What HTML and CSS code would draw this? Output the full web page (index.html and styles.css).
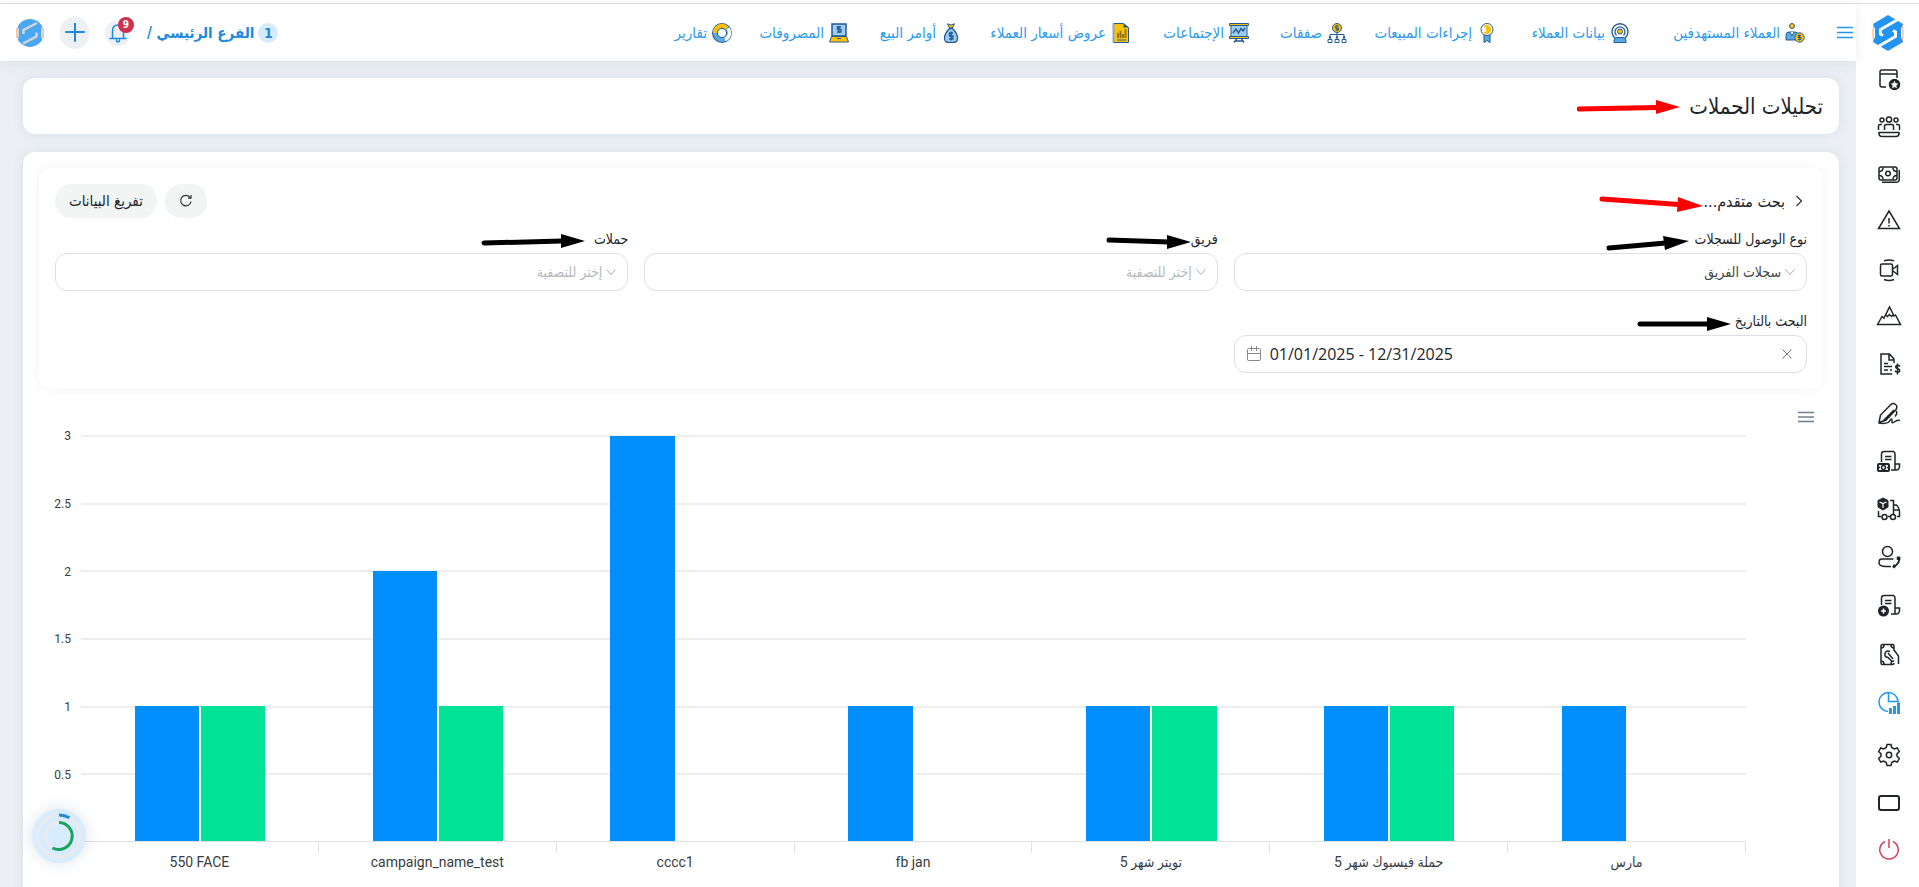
FILE: index.html
```
<!DOCTYPE html>
<html lang="ar" dir="rtl">
<head>
  <meta charset="UTF-8" />
  <meta name="viewport" content="width=device-width, initial-scale=1.0"/>
  <title>تحليلات الحملات</title>
  <link rel="stylesheet" href="styles.css">
</head>
<body>
  <div class="app">

    <!-- Sidebar -->
    <aside class="sidebar">
      <a class="logo" href="#" aria-label="الرئيسية">
        <svg width="32" height="36" viewBox="0 0 32 36">
          <path d="M2 10 Q0 18 2 27 M30 10 Q32 18 30 27" fill="none" stroke="#ffc48f" stroke-width="1.5"/>
          <path d="M16 0 31 9 29 14V22L31 27 16 36 1 27 3 22V14L1 9Z" fill="#2094f0"/>
          <path d="M25 5 8.500 14.500V19L11 20.500M7 31 23.500 21.500V17L21 15.500" fill="none" stroke="#fff" stroke-width="3"/>
        </svg>
      </a>
      <nav class="side-menu">
        <a href="#" aria-label="الحجوزات"><svg viewBox="0 0 24 24"><path d="M9 20H5q-2 0-2-2V5q0-2 2-2h13q2 0 2 2v6M3 7h17"/><circle class="solid" cx="17.500" cy="17.500" r="5"/><path fill="#fff" stroke="none" d="m17.500 13.800 1.200 2.500 2.600.3-1.900 1.900.5 2.700-2.400-1.300-2.400 1.300.5-2.700-1.900-1.900 2.600-.3z"/></svg></a>
        <a href="#" aria-label="الموظفون"><svg viewBox="0 0 24 24"><circle cx="12" cy="4.500" r="2.600"/><circle cx="5" cy="5" r="2"/><circle cx="19" cy="5" r="2"/><path d="M7.500 15v-4q0-1.500 1.500-1.500h6q1.500 0 1.500 1.500v4M1.500 15v-4q0-1.500 1.500-1.500h2M22.500 15v-4q0-1.500-1.500-1.500h-2M2 17.500h20v1q0 3-3 3H5q-3 0-3-3z"/></svg></a>
        <a href="#" aria-label="المالية"><svg viewBox="0 0 24 24"><rect x="2" y="4" width="18" height="13" rx="2"/><circle cx="11" cy="10.500" r="2.300"/><path d="M2 8.500q4 0 4-4M20 8.500q-4 0-4-4M2 12.500q4 0 4 4M20 12.500q-4 0-4 4M22.300 7v9q0 3.300-3.300 3.300H5"/></svg></a>
        <a href="#" aria-label="التنبيهات"><svg viewBox="0 0 24 24"><path d="M12 0 22.500 17.500H1.500zM12 7v5.500M12 14v1.500"/></svg></a>
        <a href="#" aria-label="الإجتماعات"><svg viewBox="0 0 24 24"><rect x="3.500" y="5" width="12" height="12" rx="1.500"/><path d="m16 10 4.500-3.500v9L16 12M7 1.800q5-1.800 10 0M7 20.500q5 1.800 10 0"/></svg></a>
        <a href="#" aria-label="الأهداف"><svg viewBox="0 0 24 24"><path d="M.5 17.500 5 9.500l2 1.500L12.500 0 17 9l1.500-1 5 9.500zM9 8l1.500 1.500 2-2 2 2L16 8"/></svg></a>
        <a href="#" aria-label="الفواتير"><svg viewBox="0 0 24 24"><path d="M17 8V4L12.500-1H4v20h11M12 -1v6h5M7 8.500h4M7 11.500h8M7 15h4M13 15h2M23 11.500q-1-1.500-2.500-1.300-2.500.5-1.500 2.500 2.500 1 3.500 2 .8 2-1.500 2.500-2 .2-3-1.500M20.500 8.500v11"/></svg></a>
        <a href="#" aria-label="العقود"><svg viewBox="0 0 24 24"><path d="M2 19.500 3.500 12 14 1.500q2-2 4.500 0t.5 5L9 17zM6 18 17 7M19 8q2 2-1 5.500M2 20q9 1.500 11-2.500 2-3 2 0-.5 4 3 1 3-2 5-1"/></svg></a>
        <a href="#" aria-label="كشوف الرواتب"><svg viewBox="0 0 24 24"><path d="M4.500 11V3q0-2.500 2.500-2.500h9.500q1.500.5 1.500 2.500V13h4.500v2q0 4-3.500 4H14M8 5.500h6.500M8 8.500h6.500M18 13v6"/><rect x="1" y="13" width="11" height="7" rx="1" stroke-width="2"/><circle cx="6.500" cy="16.500" r="2"/><path d="M1 16.500h2M10 16.500h2"/></svg></a>
        <a href="#" aria-label="التوصيل"><svg viewBox="0 0 24 24"><path class="solid" stroke-width="1" d="M6-1 11 1.500v6.500l-5 3-5-3V1.500z"/><path stroke="#fff" stroke-width="1.200" d="m2.500 3 3.500 1.500L9.500 3M6 4.500V9"/><path d="M1.500 12v5.500H4M13 1.500h3.500V15M11 17.500h2M16.500 6h3q3 3 3 7v4.500H20M17 11h5"/><circle cx="7.500" cy="18" r="2.500"/><circle cx="16" cy="18" r="2.500"/></svg></a>
        <a href="#" aria-label="خدمة العملاء"><svg viewBox="0 0 24 24"><circle cx="10.500" cy="4.500" r="5"/><path d="M14 19.500H9q-7 0-7-4t3.500-3.500h11"/><path d="M22.300 11q.7 5-5.500 9" stroke-width="2"/><path d="M21.500 9.500v3.500M16 18.500l2.500 1.500" stroke-width="3.500"/></svg></a>
        <a href="#" aria-label="إضافة مستند"><svg viewBox="0 0 24 24"><path d="M4.500 10V3q0-2.500 2.500-2.500h9.500q1.500.5 1.500 2.500V13h4.500v2q0 4-3.500 4H14M8 5.500h6.500M8 8.500h6.500M18 13v6"/><circle class="solid" cx="6.500" cy="16" r="4.800"/><path stroke="#fff" d="M6.500 13.500v5M4 16h5"/></svg></a>
        <a href="#" aria-label="السلف"><svg viewBox="0 0 24 24"><path d="M17 8V3q0-1.500-1.500-1.500h-10Q4 1.500 4 3v17q0 1.500 1.500 1.500h10Q17 21.500 17 20M4 5q3 0 3-3M17 5q-3 0-3-3M4 18q3 0 3 3M17 18q-3 0-3 3M13 8.500q-4-1.500-5 2t3 4l4 4M11 10l5 6M17 7l4.500 6v8"/></svg></a>
        <a class="active" href="#" aria-label="التحليلات"><svg viewBox="0 0 24 24"><path d="M11 20.500A9.500 9.500 0 1 1 21 10.500H11.500V1.500"/><path stroke-width="3" stroke-linecap="butt" d="M13.500 23v-6M17.500 23v-8M21.500 23V11.500"/></svg></a>
        <a href="#" aria-label="الإعدادات" class="gap-top"><svg viewBox="0 0 24 24"><path d="m10 1.500h4l.7 3 2.600 1.500 3-1 2 3.500-2.300 2.200v2.600l2.300 2.200-2 3.500-3-1-2.600 1.500-.7 3h-4l-.7-3L6.700 18l-3 1-2-3.500L4 13.300v-2.600L1.700 8.500l2-3.500 3 1 2.600-1.500z"/><circle cx="12" cy="12" r="2.700"/></svg></a>
        <a href="#" aria-label="الشاشة"><svg viewBox="0 0 24 24"><rect x="2" y="5" width="20" height="14" rx="2" stroke-width="2"/></svg></a>
        <a class="danger" href="#" aria-label="تسجيل الخروج"><svg viewBox="0 0 24 24"><path d="M8 2.500a9.200 9.200 0 1 0 8 0M12 0v9"/></svg></a>
      </nav>
    </aside>

    <!-- Header -->
    <header class="topbar">
      <button class="icon-btn burger" aria-label="القائمة"><svg width="16" height="14" viewBox="0 0 16 14"><path d="M0 1.500h16M0 6.500h16M0 11.500h16" stroke="#2196f3" stroke-width="1.300"/></svg></button>
      <nav class="top-menu">
        <a href="#"><svg viewBox="0 0 20 20"><circle cx="7" cy="3" r="2.500" fill="#ffc107" stroke="#245a94"/><path d="M1 17v-5q0-3 3-3h6q3 0 3 3v5z" fill="#59a9e2" stroke="#245a94"/><path d="m5 9 2 4 2-4" fill="#fff" stroke="#245a94"/><circle cx="14.500" cy="14.500" r="4.700" fill="#ffc107" stroke="#245a94"/><path d="M16 12.500h-3v2h3v2h-3M14.500 11.500v6" fill="none" stroke="#245a94"/></svg>العملاء المستهدفين</a>
        <a href="#"><svg viewBox="0 0 20 20"><path d="M5 15a8 8 0 1 1 10 0M6.500 12.500a5 5 0 1 1 7 0" fill="none" stroke="#245a94" stroke-width="1.300"/><circle cx="10" cy="8.500" r="2.500" fill="#ffc107" stroke="#245a94"/><path d="M4 19.500v-2q0-3 3-3h6q3 0 3 3v2z" fill="#59a9e2" stroke="#245a94"/></svg>بيانات العملاء</a>
        <a href="#"><svg viewBox="0 0 20 20"><path d="M7 11v8.500l3-2 3 2V11z" fill="#59a9e2" stroke="#245a94"/><circle cx="10" cy="6.500" r="6" fill="#fff" stroke="#245a94"/><path d="M6 4a4.500 4.500 0 1 1 0 5h3V4z" fill="#ffc107"/></svg>إجراءات المبيعات</a>
        <a href="#"><svg viewBox="0 0 20 20"><circle cx="10" cy="5" r="4.500" fill="#ffc107" stroke="#245a94"/><path d="M11.500 3h-3v2h3v2h-3M10 2v6M10 9.500V14M3 14v-2.500h14V14" fill="none" stroke="#245a94"/><path d="M1 19.500v-3h4v3zM8 19.500v-3h4v3zM15 19.500v-3h4v3z" fill="#fff" stroke="#245a94"/><circle cx="3" cy="14.500" r="1.300" fill="#245a94"/><circle cx="10" cy="14.500" r="1.300" fill="#245a94"/><circle cx="17" cy="14.500" r="1.300" fill="#245a94"/></svg>صفقات</a>
        <a href="#"><svg viewBox="0 0 20 20"><rect x="2" y="2" width="16" height="12" fill="#9ccdf0" stroke="#245a94"/><path d="M.5.500h19v2H.5zM.5 13.500h19v2H.5z" fill="#ffc107" stroke="#245a94"/><path d="m4 10 3-4 2.500 4L12 5.500l2 2.500 2-3M7.500 16 5 19.500M12.500 16l2.500 3.500M5.500 18h9" fill="none" stroke="#245a94" stroke-width="1.400"/></svg>الإجتماعات</a>
        <a href="#"><svg viewBox="0 0 20 20"><path d="M2.500.5h10l5 4v15h-15z" fill="#ffc107" stroke="#245a94"/><path d="M12.500.5v4h5z" fill="#245a94"/><path d="M2.500.5v19" stroke="#8aa9c8" stroke-width="2"/><path d="M7 15v-5M9.500 15V8M12 15v-4M14.500 15V6" stroke="#8a6d1d" stroke-width="1.800"/><path d="M6 17h9" stroke="#245a94"/></svg>عروض أسعار العملاء</a>
        <a href="#"><svg viewBox="0 0 20 20"><path d="M6.500.8 10 2l3.500-1.200L11.500 5h-3z" fill="#ffc107" stroke="#245a94"/><path d="M8.500 5.500h3q5 5 5 9.500 0 4.500-4 4.500h-5q-4 0-4-4.500 0-4.500 5-9.500z" fill="#9ccdf0" stroke="#245a94" stroke-width="1.300"/><path d="M12 10H8.500v3H12v3H8M10.200 8.500v9" fill="none" stroke="#245a94" stroke-width="1.300"/></svg>أوامر البيع</a>
        <a href="#"><svg viewBox="0 0 20 20"><rect x="3" y="1" width="14" height="12" fill="#9ccdf0" stroke="#245a94" stroke-width="1.500"/><path d="M12 4H8.500v2.500H12V9H8M10 3v7" fill="none" stroke="#245a94" stroke-width="1.300"/><path d="M2.500 13.500h15l2 5.500H.5z" fill="#ffc107" stroke="#245a94"/><path d="M8 15.500h4" stroke="#245a94"/></svg>المصروفات</a>
        <a href="#"><svg viewBox="0 0 20 20"><circle cx="10" cy="10" r="7" fill="none" stroke="#245a94" stroke-width="6"/><circle cx="10" cy="10" r="7" fill="none" stroke="#59a9e2" stroke-width="4"/><path d="M3 10a7 7 0 0 1 12-5" fill="none" stroke="#ffc107" stroke-width="4"/><path d="M16 5.500a7 7 0 0 1-3 11" fill="none" stroke="#fff" stroke-width="3.500"/></svg>تقارير</a>
      </nav>
      <div class="user-area">
        <a class="branch" href="#"><span class="count">1</span><span>الفرع الرئيسي /</span></a>
        <button class="icon-btn bell" aria-label="الإشعارات">
          <svg width="18" height="20" viewBox="0 0 18 20"><path d="M1 15.500h16M3.500 15V8q0-6 5.500-6t5.500 6v7M7.500 17q0 2 1.500 2t1.500-2" fill="none" stroke="#1e88dd" stroke-width="1.500" stroke-linecap="round"/></svg>
          <span class="badge">9</span>
        </button>
        <button class="icon-btn plus" aria-label="إضافة"><svg width="20" height="20" viewBox="0 0 20 20"><path d="M10 0v18M1 9h18" stroke="#1e88dd" stroke-width="2" stroke-linecap="round"/></svg></button>
        <a class="avatar" href="#" aria-label="الحساب">
          <svg width="28" height="28" viewBox="0 0 28 28"><circle cx="14" cy="14" r="14" fill="#d3d5d6"/><path d="M1 9q-2 5 0 10M27 9q2 5 0 10" stroke="#f0c6a5" fill="none" stroke-width="2"/><path d="M14 0q9 1 12 7l-1 4v6l1 4q-4 6-12 7-8-1-12-7l1-4v-6L2 7q3-6 12-7z" fill="#4aa8f3"/><path d="M21 4 7.500 11v4M7 24.500l13.500-7v-4" fill="none" stroke="#d3d5d6" stroke-width="2.500"/></svg>
        </a>
      </div>
    </header>

    <!-- Page -->
    <main class="page">
      <section class="card title-card">
        <h1>تحليلات الحملات</h1>
        <svg class="arrow arrow-title" width="103" height="16" viewBox="0 0 103 16"><path d="M2 10 80 8.500" stroke="red" stroke-width="5" stroke-linecap="round"/><path d="M79 1v14l24-7z" fill="red"/></svg>
      </section>

      <section class="card content-card">
        <form class="filters">
          <div class="filters-head">
            <h2><svg width="8" height="12" viewBox="0 0 8 12"><path d="m1.500 1 5 5-5 5" fill="none" stroke="#333" stroke-width="1.200"/></svg>بحث متقدم...</h2>
            <svg class="arrow arrow-search" width="105" height="18" viewBox="0 0 105 18"><path d="m3 4 77 5.500" stroke="red" stroke-width="5" stroke-linecap="round"/><path d="m79 2-1 15 26-6z" fill="red"/></svg>
            <div class="actions">
              <button type="button" class="pill" aria-label="تحديث"><svg width="14" height="14" viewBox="0 0 14 14"><path d="M12 7.500A5.200 5.200 0 1 1 11 3.500M12 1v3.200H9" fill="none" stroke="#333" stroke-width="1.200"/></svg></button>
              <button type="reset" class="pill">تفريغ البيانات</button>
            </div>
          </div>

          <div class="fields">
            <div class="field">
              <label for="access">نوع الوصول للسجلات</label>
              <svg class="arrow arrow-access" width="83" height="16" viewBox="0 0 83 16"><path d="M3 13 60 8" stroke="#000" stroke-width="5" stroke-linecap="round"/><path d="m57 1 2 14 24-9z"/></svg>
              <div class="control">
                <select id="access"><option>سجلات الفريق</option></select>
                <svg class="chevron" viewBox="0 0 10 6"><path d="m.5.500 4.500 5 4.500-5"/></svg>
              </div>
            </div>
            <div class="field">
              <label for="team">فريق</label>
              <svg class="arrow arrow-team" width="85" height="16" viewBox="0 0 85 16"><path d="m3 6 60 2" stroke="#000" stroke-width="5" stroke-linecap="round"/><path d="M61 1v14l24-7z"/></svg>
              <div class="control">
                <select id="team" class="empty"><option>إختر للتصفية</option></select>
                <svg class="chevron" viewBox="0 0 10 6"><path d="m.5.500 4.500 5 4.500-5"/></svg>
              </div>
            </div>
            <div class="field">
              <label for="campaigns">حملات</label>
              <svg class="arrow arrow-campaigns" width="104" height="16" viewBox="0 0 104 16"><path d="m3 10 78-2" stroke="#000" stroke-width="5" stroke-linecap="round"/><path d="M80 1v14l24-7z"/></svg>
              <div class="control">
                <select id="campaigns" class="empty"><option>إختر للتصفية</option></select>
                <svg class="chevron" viewBox="0 0 10 6"><path d="m.5.500 4.500 5 4.500-5"/></svg>
              </div>
            </div>
            <div class="field">
              <label for="dates">البحث بالتاريخ</label>
              <svg class="arrow arrow-date" width="94" height="16" viewBox="0 0 94 16"><path d="M3 8h68" stroke="#000" stroke-width="5" stroke-linecap="round"/><path d="M70 1v14l24-7z"/></svg>
              <div class="control date-control">
                <button type="button" class="icon-btn" aria-label="مسح"><svg width="14" height="12" viewBox="0 0 14 12"><path d="m2.500 1.500 9 9M11.500 1.500l-9 9" stroke="#777"/></svg></button>
                <input id="dates" type="text" dir="ltr" value="01/01/2025 - 12/31/2025">
                <svg width="14" height="16" viewBox="0 0 14 16"><path d="M.5 3.500q0-1 1-1h11q1 0 1 1v10q0 1-1 1h-11q-1 0-1-1zM.5 7.500h13M4.500 0v5M9.500 0v5" fill="none" stroke="#888"/></svg>
              </div>
            </div>
          </div>
        </form>

        <!-- Chart -->
        <div class="chart" dir="ltr">
          <button class="icon-btn chart-menu" aria-label="قائمة الرسم"><svg width="16" height="12" viewBox="0 0 16 12"><path d="M0 1.500h16M0 6h16M0 10.500h16" stroke="#6e8192" stroke-width="1.600"/></svg></button>
          <div class="y-axis">
            <span>3</span><span>2.5</span><span>2</span><span>1.5</span><span>1</span><span>0.5</span>
          </div>
          <div class="plot">
            <div class="lines"><i></i><i></i><i></i><i></i><i></i><i></i></div>
            <div class="groups">
              <div class="group"><b class="blue" style="height:33.333%"></b><b class="green" style="height:33.333%"></b></div>
              <div class="group"><b class="blue" style="height:66.667%"></b><b class="green" style="height:33.333%"></b></div>
              <div class="group"><b class="blue" style="height:100%"></b><b class="green" style="height:0%"></b></div>
              <div class="group"><b class="blue" style="height:33.333%"></b><b class="green" style="height:0%"></b></div>
              <div class="group"><b class="blue" style="height:33.333%"></b><b class="green" style="height:33.333%"></b></div>
              <div class="group"><b class="blue" style="height:33.333%"></b><b class="green" style="height:33.333%"></b></div>
              <div class="group"><b class="blue" style="height:33.333%"></b><b class="green" style="height:0%"></b></div>
            </div>
          </div>
          <div class="x-axis">
            <span>550 FACE</span><span>campaign_name_test</span><span>cccc1</span><span>fb jan</span><span dir="rtl">تويتر شهر 5</span><span dir="rtl">حملة فيسبوك شهر 5</span><span>مارس</span>
          </div>
        </div>
      </section>
    </main>
  </div>

  <!-- Floating progress -->
  <button class="progress" aria-label="نسبة الإنجاز">
    <svg width="46" height="46" viewBox="0 0 46 46" fill="none" stroke-width="3">
      <circle cx="23" cy="23" r="21" stroke="#e8eaec"/>
      <circle cx="23" cy="23" r="13.500" stroke="#e8eaec"/>
      <path d="M23 2a21 21 0 0 1 10.500 2.800" stroke="#1e88dd"/>
      <path d="M23 9.500a13.500 13.500 0 1 1-6.500 25.500" stroke="#1aa35a"/>
    </svg>
  </button>
</body>
</html>
```
FILE: styles.css
```
* { box-sizing: border-box; }

body {
  margin: 0;
  padding-top: 3px;
  height: 100vh;
  overflow: hidden;
  font-family: "DejaVu Sans Condensed", "DejaVu Sans", sans-serif;
  font-size: 14px;
  color: #212529;
  background: #fff;
}

a { color: inherit; text-decoration: none; }

button, select, input { font: inherit; color: inherit; }

.icon-btn {
  display: flex;
  align-items: center;
  justify-content: center;
  padding: 0;
  border: none;
  background: none;
  cursor: pointer;
}

.app {
  display: grid;
  grid-template-columns: 63px minmax(0, 1fr);
  grid-template-rows: 57px minmax(0, 1fr);
  height: 100%;
  border-top: 1px solid #dddfe1;
}

/* Sidebar */
.sidebar {
  grid-row: 1 / 3;
  background: #fff;
}

.logo {
  display: flex;
  justify-content: center;
  padding: 11px 0 4px;
}

.side-menu {
  display: flex;
  flex-direction: column;
  padding-left: 3px;
}

.side-menu a {
  display: flex;
  align-items: center;
  justify-content: center;
  height: 48px;
}

.side-menu svg {
  width: 24px;
  height: 24px;
  overflow: visible;
  fill: none;
  stroke: #212529;
  stroke-width: 1.5;
}

.side-menu .solid { fill: #212529; }
.side-menu .active svg { stroke: #2196f3; }
.side-menu .danger svg { stroke: #d6405c; }
.side-menu .gap-top { margin-top: 4px; }

/* Header */
.topbar {
  display: flex;
  align-items: center;
  gap: 32px;
  padding: 0 3px 0 16px;
  background: #fff;
  box-shadow: 0 2px 12px rgba(60, 70, 80, 0.1);
  z-index: 1;
}

.top-menu {
  display: grid;
  grid-template-columns: 143px 101px 118px 66px 86px 138px 80px 85px 54px;
  gap: 32px;
}

.top-menu a {
  display: flex;
  align-items: center;
  gap: 5px;
  font-size: 15px;
  white-space: nowrap;
  color: #2c9af0;
}

.top-menu svg {
  flex: none;
  width: 20px;
  height: 20px;
}

.user-area {
  display: flex;
  align-items: center;
  gap: 16px;
  margin-right: auto;
}

.branch {
  display: flex;
  align-items: center;
  gap: 4px;
  font-size: 15px;
  font-weight: bold;
  color: #1e88dd;
}

.count {
  width: 20px;
  border-radius: 10px;
  font-size: 14px;
  line-height: 20px;
  text-align: center;
  background: #d6ebff;
}

.bell {
  position: relative;
  width: 26px;
  height: 26px;
  border-radius: 50%;
  background: #edf1f5;
}

.badge {
  position: absolute;
  top: -3px;
  right: -3px;
  width: 16px;
  border-radius: 8px;
  font-size: 10px;
  font-weight: bold;
  line-height: 16px;
  text-align: center;
  color: #fff;
  background: #d0304f;
}

.plus {
  width: 29px;
  height: 32px;
  border-radius: 16px;
  background: #edf1f5;
}

.avatar { display: flex; }

/* Page */
.page {
  display: flex;
  flex-direction: column;
  gap: 18px;
  padding: 17px 17px 0 23px;
  overflow: hidden;
  background: #ecf0f4;
}

.card {
  flex: none;
  border-radius: 12px;
  background: #fff;
  box-shadow: 0 0 12px rgba(70, 80, 95, 0.1);
}

.title-card {
  position: relative;
  display: flex;
  align-items: center;
  height: 56px;
  padding: 0 16px;
}

h1, h2 { margin: 0; font-weight: normal; }
h1 { font-size: 22px; }

.arrow { position: absolute; }
.arrow-title { top: 21px; right: 159px; }
.arrow-search { top: 11px; right: 103px; }
.arrow-access { top: 7px; right: 118px; }
.arrow-team { top: 6px; right: 27px; }
.arrow-campaigns { top: 5px; right: 43px; }
.arrow-date { top: 6px; right: 76px; }

.content-card { padding: 16px 16px 0; }

.filters {
  padding: 16px;
  border-radius: 12px;
  background: #fff;
  box-shadow: 0 0 12px rgba(0, 0, 0, 0.06);
}

.filters-head {
  position: relative;
  display: flex;
  align-items: center;
  justify-content: space-between;
  margin-bottom: 10px;
}

h2 {
  display: flex;
  align-items: center;
  gap: 10px;
  padding-right: 4px;
  font-size: 16px;
}

.actions { display: flex; gap: 8px; }

.pill {
  display: flex;
  align-items: center;
  height: 34px;
  padding: 0 14px;
  border: none;
  border-radius: 16px;
  font-size: 15px;
  background: #f3f5f5;
  cursor: pointer;
}

.fields {
  display: grid;
  grid-template-columns: repeat(3, 1fr);
  gap: 19px 16px;
}

.field { position: relative; }

.field label {
  display: block;
  height: 25px;
  font-size: 14px;
  line-height: 22px;
}

.control {
  display: grid;
  align-items: center;
  height: 38px;
  border: 1px solid #dcdfe4;
  border-radius: 12px;
}

.control select {
  grid-area: 1 / 1;
  width: 100%;
  height: 100%;
  padding: 0 25px;
  border: none;
  border-radius: 12px;
  color: #444;
  background: none;
  appearance: none;
}

.control .empty { color: #b4b8bc; }

.chevron {
  grid-area: 1 / 1;
  width: 10px;
  margin-right: 11px;
  fill: none;
  stroke: #aaa;
  pointer-events: none;
}

.date-control {
  display: flex;
  gap: 9px;
  padding: 0 12px;
}

.date-control input {
  flex: 1;
  min-width: 0;
  padding: 0;
  border: none;
  font-family: "Open Sans", "Noto Sans", sans-serif;
  font-size: 16px;
  background: none;
}

/* Chart */
.chart {
  display: grid;
  grid-template-columns: 34px 1fr;
  grid-template-rows: 46px 407px 60px;
  padding: 0 77px 0 8px;
  font-family: Roboto, "DejaVu Sans Condensed", sans-serif;
  font-size: 12px;
  color: #373d3f;
}

.chart-menu {
  grid-column: 1 / 3;
  align-self: end;
  justify-self: end;
  margin: 0 -68px 12px 0;
}

.y-axis {
  display: flex;
  flex-direction: column;
  text-align: right;
  padding-right: 10px;
}

.y-axis span {
  flex: 1;
  line-height: 2px;
}

.plot {
  display: grid;
  border-bottom: 1px solid #dfe1e3;
}

.lines, .groups {
  grid-area: 1 / 1;
  display: flex;
}

.lines { flex-direction: column; }
.lines i { flex: 1; border-top: 2px solid #eeeeee; }

.groups { padding-top: 1px; }

.group {
  flex: 1;
  display: flex;
  align-items: flex-end;
  justify-content: center;
  gap: 2px;
}

.group b { width: 27%; }
.blue { background: #008ffb; }
.green { background: #00e396; }

.x-axis {
  grid-column: 2;
  display: flex;
  text-align: center;
  font-size: 14px;
}

.x-axis span {
  flex: 1;
  height: 7px;
  padding-top: 11px;
  border-right: 1px solid #dfe1e3;
  line-height: 18px;
  white-space: nowrap;
}

/* Floating progress */
.progress {
  position: fixed;
  left: 32px;
  bottom: 24px;
  z-index: 2;
  display: flex;
  align-items: center;
  justify-content: center;
  width: 54px;
  height: 54px;
  padding: 0;
  border: none;
  border-radius: 50%;
  background: #d8ecff;
  box-shadow: 0 0 16px rgba(60, 90, 130, 0.18);
  cursor: pointer;
}
```
